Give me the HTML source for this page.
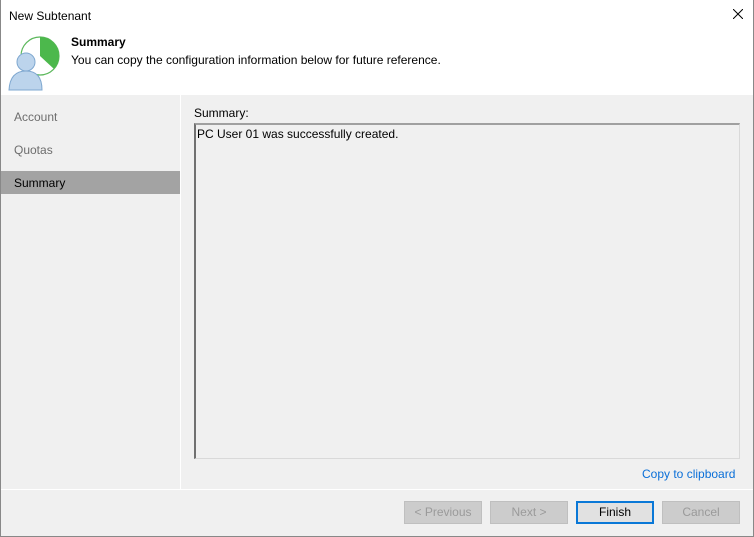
<!DOCTYPE html>
<html><head><style>
*{margin:0;padding:0;box-sizing:border-box}
body{width:754px;height:537px;overflow:hidden;font-family:"Liberation Sans",sans-serif;font-size:12px;color:#000;background:#f0f0f0;position:relative}
.win{position:absolute;left:0;top:0;width:754px;height:537px;border:1px solid #888;border-top:none}
.a{position:absolute}
.btn{position:absolute;top:501px;width:78px;height:23px;border:1px solid #bfbfbf;background:#cccccc;color:#9a9a9a;text-align:center;line-height:21px}
</style></head><body>
<div class="a" style="left:0;top:0;width:754px;height:95px;background:#fff"></div>
<div class="a" style="left:9px;top:9px;font-size:12px">New Subtenant</div>
<svg class="a" style="left:733px;top:9px" width="10" height="10"><path d="M0 0L10 10M10 0L0 10" stroke="#000" stroke-width="1"/></svg>
<svg class="a" style="left:8px;top:36px" width="54" height="56">
<circle cx="32" cy="20" r="19" fill="#fff" stroke="#5cb85c" stroke-width="1.2"/>
<path d="M32 20 L32 1 A19 19 0 0 1 46 33 Z" fill="#4cb84c"/>
<circle cx="18" cy="26" r="9" fill="#bcd4ec" stroke="#7fa8d0"/>
<path d="M1 54 Q2 35 18 35 Q34 35 34 54 Z" fill="#bcd4ec" stroke="#7fa8d0"/>
</svg>
<div class="a" style="left:71px;top:35px;font-weight:bold">Summary</div>
<div class="a" style="left:71px;top:53px">You can copy the configuration information below for future reference.</div>
<div class="a" style="left:180px;top:95px;width:1px;height:394px;background:#fff"></div>
<div class="a" style="left:0;top:489px;width:754px;height:1px;background:#fff"></div>
<div class="a" style="left:14px;top:110px;color:#6d6d6d">Account</div>
<div class="a" style="left:14px;top:143px;color:#6d6d6d">Quotas</div>
<div class="a" style="left:1px;top:171px;width:179px;height:23px;background:#a3a3a3"></div>
<div class="a" style="left:14px;top:176px">Summary</div>
<div class="a" style="left:194px;top:106px">Summary:</div>
<div class="a" style="left:194px;top:123px;width:546px;height:336px;border:1px solid #d9d9d9;border-left:2px solid #707070;border-top:2px solid #a0a0a0"></div>
<div class="a" style="left:197px;top:127px">PC User 01 was successfully created.</div>
<div class="a" style="left:642px;top:467px;color:#0a6fd8">Copy to clipboard</div>
<div class="btn" style="left:404px">&lt; Previous</div>
<div class="btn" style="left:490px">Next &gt;</div>
<div class="btn" style="left:576px;background:#e1e1e1;border:2px solid #0a78d7;color:#000;line-height:19px">Finish</div>
<div class="btn" style="left:662px">Cancel</div>
<div class="win"></div>
</body></html>
